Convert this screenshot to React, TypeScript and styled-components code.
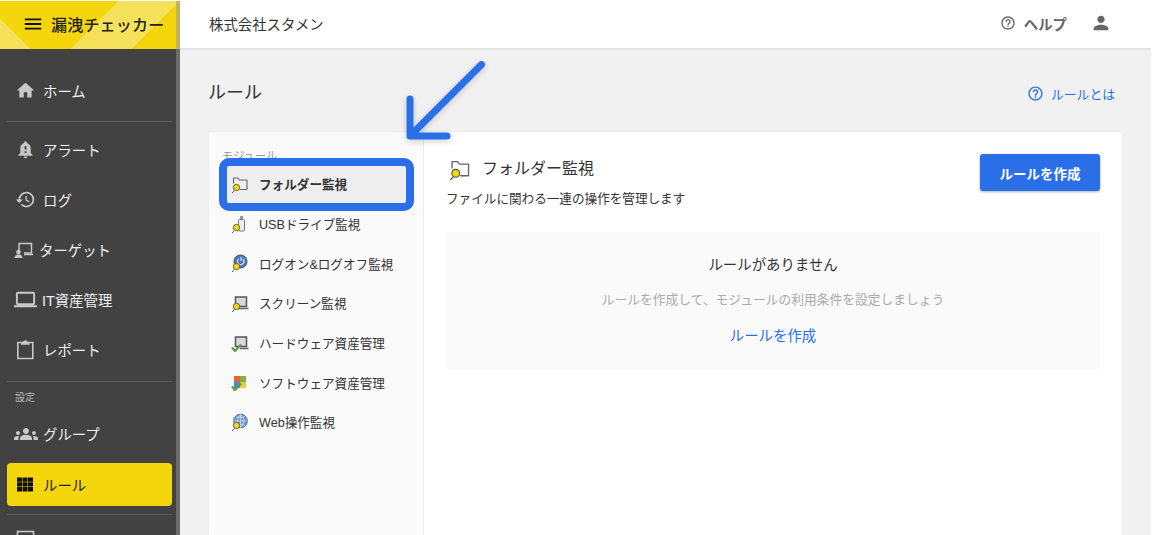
import { ReactNode } from 'react';
import styled, { createGlobalStyle } from 'styled-components';
import {
  MdGroups,
  MdHelpOutline,
  MdHistory,
  MdHome,
  MdMenu,
  MdNotificationImportant,
  MdOutlineLaptop,
  MdPerson,
} from 'react-icons/md';

const BLUE = '#2a6fe8';
const YELLOW = '#f5d60c';

const GlobalStyle = createGlobalStyle`
  html, body {
    margin: 0;
    height: 100%;
    background: #fff;
  }
  body {
    font-family: "Liberation Sans", "Noto Sans CJK JP", sans-serif;
    color: #333;
    overflow: hidden;
  }
  * {
    box-sizing: border-box;
  }
`;

const Page = styled.div`
  position: relative;
  width: 1151px;
  height: 534px;
  margin-top: 1px;
  display: grid;
  grid-template-columns: 180px 1fr;
  grid-template-rows: 48px 1fr;
  overflow: hidden;
  background: #f1f1f1;
`;

const Logo = styled.div`
  display: flex;
  align-items: center;
  gap: 7px;
  padding: 0 0 3px 22px;
  background-color: ${YELLOW};
  background-image: linear-gradient(45deg, #f6e15a 13.8%, transparent 13.8%),
    linear-gradient(135deg, transparent 53%, #f6e15a 53%, #f6e15a 80%, transparent 80%);
  border-right: 4px solid #c4b25f;
  color: #222;
  font-size: 16px;
  font-weight: 500;
  letter-spacing: 0.2px;
  white-space: nowrap;
  svg {
    color: #111;
    flex: none;
  }
`;

const Header = styled.header`
  display: flex;
  align-items: center;
  padding: 0 39px 3px 29px;
  background: #fff;
  border-bottom: 1px solid #e2e2e2;
  box-shadow: 0 1px 2px rgba(0, 0, 0, 0.06);
  font-size: 14.4px;
  color: #333;
`;

const HelpButton = styled.div`
  margin-left: auto;
  display: flex;
  align-items: center;
  gap: 8px;
  color: #666;
  font-weight: 700;
  font-size: 14.4px;
`;

const UserIcon = styled(MdPerson)`
  margin-left: 23px;
  color: #666;
`;

const Sidebar = styled.nav`
  background: #424242;
  border-right: 4px solid #6c6c6c;
  padding: 17px 4px 0 7px;
  overflow: hidden;
`;

const NavItem = styled.div<{ $active?: boolean; $wide?: boolean }>`
  display: flex;
  align-items: center;
  gap: ${(props) => (props.$wide ? 5 : 7)}px;
  height: ${(props) => (props.$active ? 43 : 50)}px;
  margin-top: ${(props) => (props.$active ? 4 : 0)}px;
  padding: 0 0 1px ${(props) => (props.$wide ? 7 : 8)}px;
  border-radius: 4px;
  background: ${(props) => (props.$active ? YELLOW : 'transparent')};
  color: ${(props) => (props.$active ? '#222' : '#eee')};
  font-size: 14.4px;
  svg {
    flex: none;
    color: ${(props) => (props.$active ? '#111' : '#c8c8c8')};
  }
`;

const NavDivider = styled.div<{ $before?: number; $after?: number }>`
  height: 1px;
  margin: ${(props) => props.$before ?? 5}px 0 ${(props) => props.$after ?? 3}px;
  background: #5a5a5a;
`;

const NavLabel = styled.div`
  height: 20px;
  margin-bottom: 1px;
  padding-left: 8px;
  line-height: 20px;
  font-size: 10px;
  color: #bbb;
`;

const Main = styled.main`
  display: flex;
  flex-direction: column;
  padding: 0 29px 0 28px;
  min-height: 0;
`;

const TitleRow = styled.div`
  display: flex;
  align-items: center;
  height: 83px;
  flex: none;
`;

const PageTitle = styled.h1`
  margin: 0;
  font-size: 18px;
  font-weight: 400;
  color: #333;
`;

const TitleLink = styled.a`
  margin-left: auto;
  margin-right: 7px;
  display: flex;
  align-items: center;
  gap: 7px;
  color: ${BLUE};
  font-size: 12.8px;
  position: relative;
  top: 3px;
`;

const Card = styled.section`
  flex: 1;
  margin-left: 1px;
  display: grid;
  grid-template-columns: 215px 1fr;
  background: #fff;
  border-radius: 4px 4px 0 0;
  box-shadow: 0 0 2px rgba(0, 0, 0, 0.05);
`;

const ModulePane = styled.aside`
  background: #fafafa;
  border-right: 1px solid #eee;
  border-radius: 4px 0 0 0;
  padding: 17px 17px 0 18px;
`;

const ModuleHeading = styled.div`
  height: 14px;
  margin-left: -5px;
  line-height: 15px;
  font-size: 11.2px;
  color: #999;
`;

const ModuleItem = styled.div<{ $selected?: boolean }>`
  display: flex;
  align-items: center;
  gap: 10px;
  height: 39.6px;
  padding: 0 0 0 4px;
  font-size: 12.6px;
  color: #333;
  font-weight: ${(props) => (props.$selected ? 700 : 400)};
  ${(props) =>
    props.$selected &&
    `
    height: 37px;
    margin: 3px 0 1px;
    padding-bottom: 2px;
    background: #eee;
    outline: 8px solid ${BLUE};
    border-radius: 2px;
  `}
`;

const Content = styled.div`
  padding: 22px 22px 0;
`;

const ContentHead = styled.div`
  display: flex;
  justify-content: space-between;
  align-items: flex-start;
  margin-bottom: 23px;
`;

const ContentTitle = styled.h2`
  margin: 0;
  display: flex;
  align-items: center;
  gap: 11px;
  padding: 3px 0 0 3px;
  font-size: 16px;
  font-weight: 400;
  line-height: 24px;
  color: #333;
`;

const ContentText = styled.p`
  margin: 9px 0 0;
  font-size: 12.6px;
  line-height: 19px;
  color: #333;
`;

const CreateButton = styled.button`
  width: 120px;
  height: 37px;
  border: 0;
  border-radius: 3px;
  background: ${BLUE};
  box-shadow: 0 1px 3px rgba(0, 0, 0, 0.3);
  color: #fff;
  font-family: inherit;
  font-size: 13.5px;
  font-weight: 700;
`;

const EmptyBox = styled.div`
  height: 137px;
  display: flex;
  flex-direction: column;
  align-items: center;
  padding-top: 23px;
  background: #fafafa;
  border-radius: 2px;
`;

const EmptyTitle = styled.div`
  font-size: 14.4px;
  line-height: 20px;
  color: #333;
`;

const EmptyText = styled.div`
  margin-top: 16px;
  font-size: 12.75px;
  line-height: 18px;
  color: #aaa;
`;

const EmptyLink = styled.a`
  margin-top: 17px;
  font-size: 14.4px;
  line-height: 20px;
  color: ${BLUE};
`;

const Annotation = styled.svg`
  position: absolute;
  left: 400px;
  top: 50px;
  filter: drop-shadow(0 2px 3px rgba(0, 0, 0, 0.18));
`;

const Lens = () => (
  <g>
    <path d="M1 18l2.500-2.500" stroke="#555" strokeWidth="1" />
    <circle cx="5.500" cy="12.500" r="3.200" fill="#f5d60c" stroke="#555" strokeWidth="0.900" />
  </g>
);

const CheckMark = () => (
  <path d="M1 13.500 4 17l6-6.500" fill="none" stroke="#4fa34a" strokeWidth="2.200" />
);

const IconFrame = ({ size = 18, children }: { size?: number; children: ReactNode }) => (
  <svg width={size} height={size} viewBox="0 0 18 18" style={{ flex: 'none' }}>
    {children}
  </svg>
);

const FolderIcon = ({ size }: { size?: number }) => (
  <IconFrame size={size}>
    <path
      d="M2.500 8.500V3h4.500l1.500 2h7.500v9.500H9"
      fill="none"
      stroke="#666"
      strokeWidth="1.100"
      strokeLinejoin="round"
    />
    <Lens />
  </IconFrame>
);

const UsbIcon = () => (
  <IconFrame>
    <rect x="9" y="1" width="3" height="3.500" fill="#999" />
    <rect x="7.500" y="4.500" width="6" height="11.500" rx="1" fill="#eee" stroke="#777" />
    <Lens />
  </IconFrame>
);

const LogonIcon = () => (
  <IconFrame>
    <circle cx="9.500" cy="7.500" r="6.500" fill="#4f79b5" stroke="#34507c" />
    <path d="M7.500 5a3.300 3.300 0 1 0 4.500 0M10 3v4" fill="none" stroke="#dfe8f5" strokeWidth="1.100" />
    <Lens />
  </IconFrame>
);

const ScreenIcon = () => (
  <IconFrame>
    <rect x="4.500" y="3" width="11" height="9.500" fill="#d8d8d8" stroke="#555" strokeWidth="1.500" />
    <path d="M6 14.500h11.500" stroke="#666" strokeWidth="1.500" />
    <Lens />
  </IconFrame>
);

const HardwareIcon = () => (
  <IconFrame>
    <rect x="4.500" y="3" width="11" height="9.500" fill="#d8d8d8" stroke="#555" strokeWidth="1.500" />
    <path d="M9 14.500h8.500" stroke="#666" strokeWidth="1.500" />
    <CheckMark />
  </IconFrame>
);

const SoftwareIcon = () => (
  <IconFrame>
    <rect x="3" y="3" width="6" height="6" fill="#e5603c" />
    <rect x="9" y="3" width="6" height="6" fill="#7db346" />
    <rect x="3" y="9" width="6" height="6" fill="#4f86c6" />
    <rect x="9" y="9" width="6" height="6" fill="#f0c93c" />
    <CheckMark />
  </IconFrame>
);

const WebIcon = () => (
  <IconFrame>
    <circle cx="9.500" cy="8" r="6.800" fill="#6f96d6" stroke="#4a6ea8" />
    <path
      d="M3 8h13M9.500 1.500v13M5 3.500c3 1.500 6 1.500 9 0M5 12.500c3-1.500 6-1.500 9 0M9.500 1.500c-4 4-4 9 0 13M9.500 1.500c4 4 4 9 0 13"
      fill="none"
      stroke="#dbe6f7"
      strokeWidth="0.700"
    />
    <Lens />
  </IconFrame>
);

const TargetIcon = () => (
  <svg width="20" height="20" viewBox="0 0 20 20">
    <path d="M5 11V3.500h12.500V13H10" fill="none" stroke="#c8c8c8" strokeWidth="1.500" />
    <path d="M10 14.500h9" stroke="#c8c8c8" strokeWidth="1.500" />
    <circle cx="4.500" cy="12" r="2.300" fill="#c8c8c8" />
    <path d="M.500 18c0-2.500 2-3.500 4-3.500s4 1 4 3.500z" fill="#c8c8c8" />
  </svg>
);

const ReportIcon = () => (
  <svg width="21" height="21" viewBox="0 0 21 21">
    <path d="M6 3.500H2.800v16h15v-16h-3.200" fill="none" stroke="#c8c8c8" strokeWidth="1.600" />
    <path d="M6 2.800h2c.3-1.600 4.300-1.600 4.600 0h2v3H6z" fill="#c8c8c8" />
  </svg>
);

const RuleIcon = () => (
  <svg width="21" height="21" viewBox="0 0 21 21" fill="#111">
    <path d="M2 3.500h5v4.300H2zM7.500 3.500h5v4.300h-5zM13 3.500h5v4.300h-5zM2 8.300h5v4.300H2zM7.500 8.300h5v4.300h-5zM13 8.300h5v4.300h-5zM2 13.100h5v4.400H2zM7.500 13.100h5v4.400h-5zM13 13.100h5v4.400h-5z" />
  </svg>
);

const NextIcon = () => (
  <svg width="21" height="21" viewBox="0 0 21 21">
    <rect x="2.500" y="1.500" width="16" height="18" fill="none" stroke="#c8c8c8" strokeWidth="1.600" />
  </svg>
);

const modules = [
  { name: 'USBドライブ監視', icon: <UsbIcon /> },
  { name: 'ログオン&ログオフ監視', icon: <LogonIcon /> },
  { name: 'スクリーン監視', icon: <ScreenIcon /> },
  { name: 'ハードウェア資産管理', icon: <HardwareIcon /> },
  { name: 'ソフトウェア資産管理', icon: <SoftwareIcon /> },
  { name: 'Web操作監視', icon: <WebIcon /> },
];

const App = () => {
  return (
    <Page>
      <GlobalStyle />
      <Logo>
        <MdMenu size={22} />
        <span>漏洩チェッカー</span>
      </Logo>
      <Header>
        <span>株式会社スタメン</span>
        <HelpButton>
          <MdHelpOutline size={16} />
          <span>ヘルプ</span>
        </HelpButton>
        <UserIcon size={22} />
      </Header>
      <Sidebar>
        <NavItem>
          <MdHome size={21} />
          ホーム
        </NavItem>
        <NavDivider />
        <NavItem>
          <MdNotificationImportant size={21} />
          アラート
        </NavItem>
        <NavItem>
          <MdHistory size={21} />
          ログ
        </NavItem>
        <NavItem $wide>
          <TargetIcon />
          ターゲット
        </NavItem>
        <NavItem $wide>
          <MdOutlineLaptop size={23} />
          IT資産管理
        </NavItem>
        <NavItem>
          <ReportIcon />
          レポート
        </NavItem>
        <NavDivider $before={6} $after={6} />
        <NavLabel>設定</NavLabel>
        <NavItem $wide>
          <MdGroups size={24} />
          グループ
        </NavItem>
        <NavItem $active>
          <RuleIcon />
          ルール
        </NavItem>
        <NavDivider $before={8} $after={1} />
        <NavItem>
          <NextIcon />
        </NavItem>
      </Sidebar>
      <Main>
        <TitleRow>
          <PageTitle>ルール</PageTitle>
          <TitleLink>
            <MdHelpOutline size={17} />
            ルールとは
          </TitleLink>
        </TitleRow>
        <Card>
          <ModulePane>
            <ModuleHeading>モジュール</ModuleHeading>
            <ModuleItem $selected>
              <FolderIcon />
              フォルダー監視
            </ModuleItem>
            {modules.map((el) => (
              <ModuleItem key={el.name}>
                {el.icon}
                {el.name}
              </ModuleItem>
            ))}
          </ModulePane>
          <Content>
            <ContentHead>
              <div>
                <ContentTitle>
                  <FolderIcon size={22} />
                  フォルダー監視
                </ContentTitle>
                <ContentText>ファイルに関わる一連の操作を管理します</ContentText>
              </div>
              <CreateButton>ルールを作成</CreateButton>
            </ContentHead>
            <EmptyBox>
              <EmptyTitle>ルールがありません</EmptyTitle>
              <EmptyText>ルールを作成して、モジュールの利用条件を設定しましょう</EmptyText>
              <EmptyLink>ルールを作成</EmptyLink>
            </EmptyBox>
          </Content>
        </Card>
      </Main>
      <Annotation width="100" height="100" viewBox="0 0 100 100">
        <path
          d="M81.500 13.500 12 83M10 48v37h37"
          fill="none"
          stroke={BLUE}
          strokeWidth="7"
          strokeLinecap="round"
          strokeLinejoin="round"
        />
      </Annotation>
    </Page>
  );
};

export default App;
